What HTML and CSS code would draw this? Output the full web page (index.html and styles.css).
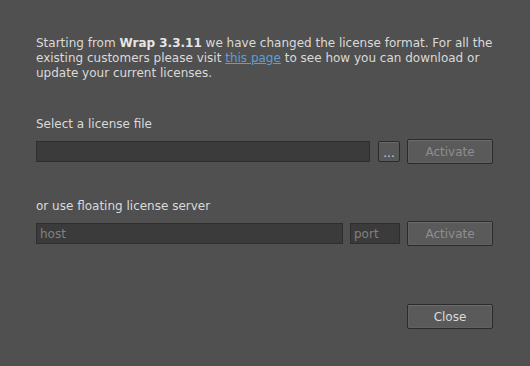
FILE: index.html
```html
<!DOCTYPE html>
<html lang="en">
<head>
    <meta charset="UTF-8">
    <title>License</title>
    <link rel="stylesheet" href="styles.css">
</head>
<body>
    <div class="dialog">
        <p class="intro">Starting from <b>Wrap 3.3.11</b> we have changed the license format. For all the existing customers please visit <a href="#">this page</a> to see how you can download or update your current licenses.</p>

        <div class="section">
            <div class="label">Select a license file</div>
            <div class="row">
                <input type="text" class="field file-field">
                <button class="small-btn">...</button>
                <button class="btn" disabled>Activate</button>
            </div>
        </div>

        <div class="section">
            <div class="label">or use floating license server</div>
            <div class="row">
                <input type="text" class="field host-field" placeholder="host">
                <input type="text" class="field port-field" placeholder="port">
                <button class="btn" disabled>Activate</button>
            </div>
        </div>

        <div class="footer">
            <button class="btn">Close</button>
        </div>
    </div>
</body>
</html>
```

FILE: styles.css
```css
body {
    margin: 0;
    padding: 0;
    background: #505050;
    font-family: 'DejaVu Sans', sans-serif;
    font-size: 12px;
    color: #dadada;
    height: 366px;
    overflow: hidden;
}

.dialog {
    padding: 36px 37px 0 36px;
    display: flex;
    flex-direction: column;
}

.intro {
    margin: 0;
    line-height: 15px;
}

.intro b {
    font-weight: bold;
    color: #e6e6e6;
}

.intro a {
    color: #5c9fd6;
    text-decoration: underline;
}

.section {
    margin-top: 36px;
}

.section + .section {
    margin-top: 35px;
}

.label {
    line-height: 14px;
    margin-bottom: 8px;
}

.row {
    display: flex;
    align-items: center;
    height: 25px;
}

.field {
    box-sizing: border-box;
    height: 21px;
    margin: 0;
    padding: 0 3px;
    background: #3b3b3b;
    border: 1px solid #2e2e2e;
    color: #dadada;
    font-family: inherit;
    font-size: 12px;
    outline: none;
}

.field::placeholder {
    color: #808080;
}

.file-field {
    width: 334px;
}

.host-field {
    width: 307px;
}

.port-field {
    width: 50px;
    margin-left: 7px;
}

.small-btn {
    box-sizing: border-box;
    width: 22px;
    height: 21px;
    margin: 0 0 0 8px;
    padding: 2px 0 0 0;
    background: #585858;
    border: 1px solid #2b2b2b;
    border-radius: 2px;
    box-shadow: inset 0 1px 0 #6a6a6a;
    color: #cfcfcf;
    font-family: inherit;
    font-size: 12px;
    line-height: 14px;
}

.btn {
    box-sizing: border-box;
    width: 86px;
    height: 25px;
    margin: 0 0 0 auto;
    padding: 0;
    background: #5a5a5a;
    border: 1px solid #2b2b2b;
    border-radius: 2px;
    box-shadow: inset 0 1px 0 #6c6c6c, inset 0 0 0 1px #616161;
    color: #dadada;
    font-family: inherit;
    font-size: 12px;
}

.btn:disabled {
    color: #8e8e8e;
}

.footer {
    display: flex;
    margin-top: 58px;
}
```
